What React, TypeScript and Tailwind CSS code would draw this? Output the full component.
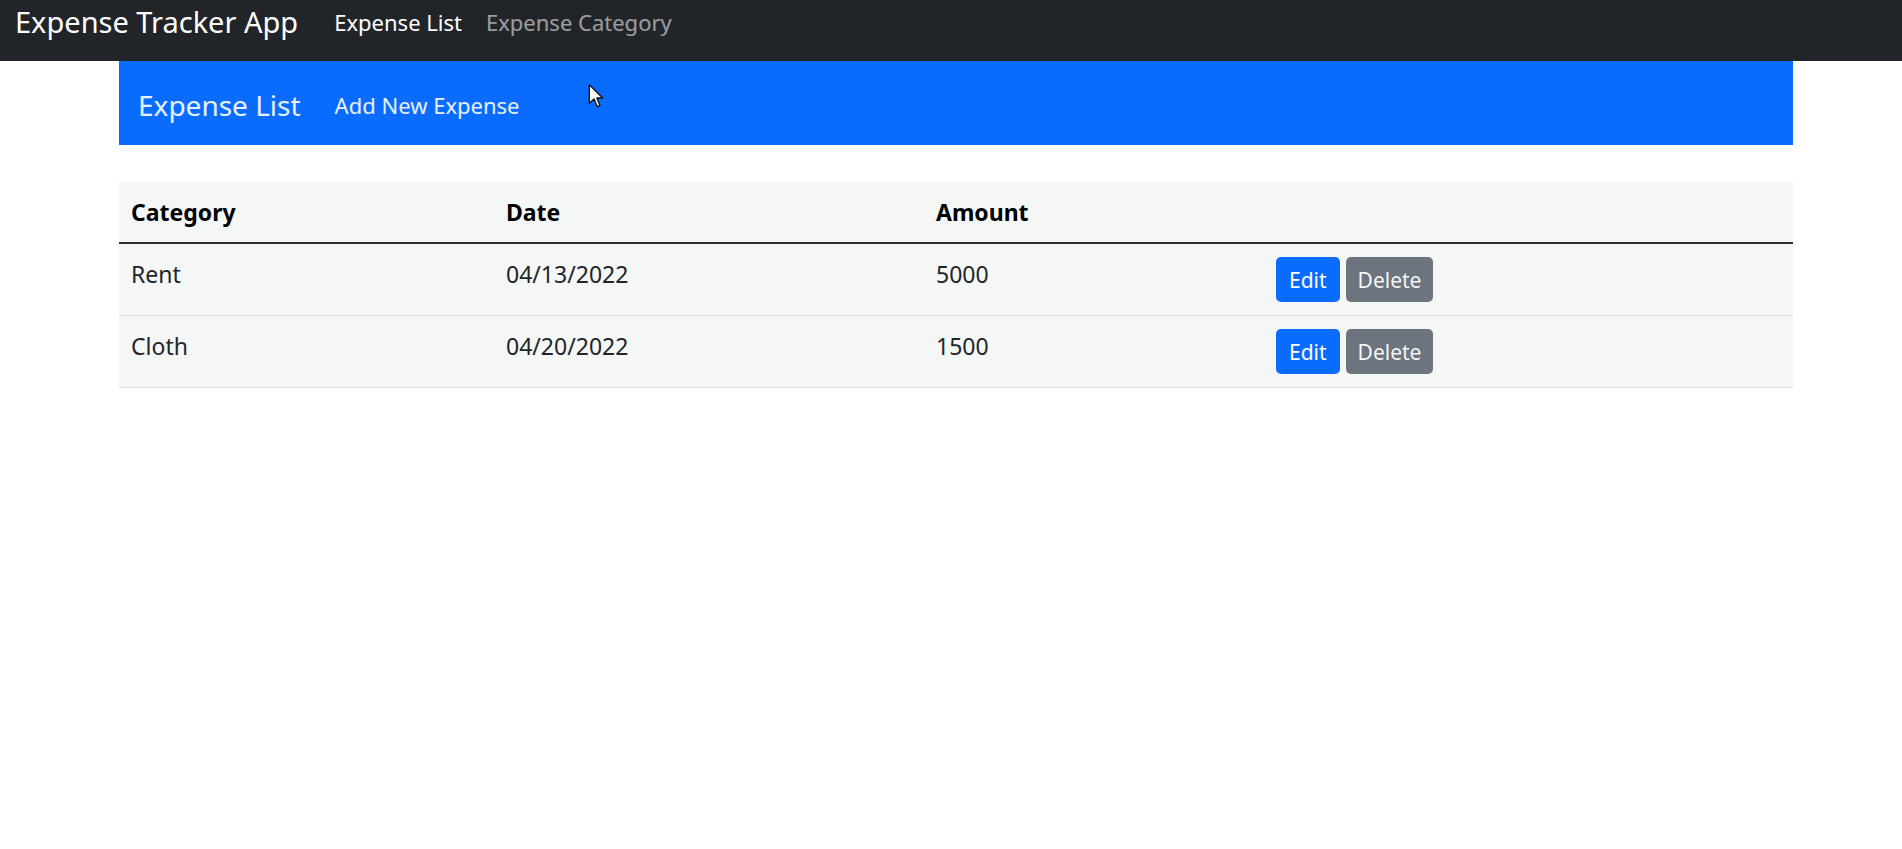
import * as React from "react";

type Expense = {
  id: number;
  category: string;
  date: string;
  amount: number;
};

const expenses: Expense[] = [
  { id: 1, category: "Rent", date: "04/13/2022", amount: 5000 },
  { id: 2, category: "Cloth", date: "04/20/2022", amount: 1500 },
];

const font = { fontFamily: '"Segoe UI", "Noto Sans", sans-serif' };

export default function App() {
  return (
    <div className="min-h-screen bg-white text-[#212529]" style={font}>
      <nav className="h-[61px] bg-[#212529] flex items-start pt-[2px] pl-[15px]">
        <a className="text-[29px] leading-[40px] text-white mr-[36px]">Expense Tracker App</a>
        <a className="text-[22px] leading-[40px] text-white pr-[24px]">Expense List</a>
        <a className="text-[22px] leading-[40px] text-white/55">Expense Category</a>
      </nav>

      <div className="ml-[119px] mr-[109px]">
        <div className="relative h-[84px] bg-[#0a6cff] flex items-center pl-[19px] pt-[4px]">
          <span className="text-[28px] text-white/90 mr-[34px]">Expense List</span>
          <span className="text-[22px] text-white/90">Add New Expense</span>
          <Cursor />
        </div>

        <ExpenseTable />
      </div>
    </div>
  );
}

function ExpenseTable() {
  return (
    <div className="mt-[37px] bg-[#f5f6f6]">
      <div className="grid grid-cols-[375px_430px_340px_1fr] border-b-2 border-[#2b2e31] text-[23px] font-bold text-black leading-[36px]">
        <div className="py-3 px-3">Category</div>
        <div className="py-3 px-3">Date</div>
        <div className="py-3 px-3">Amount</div>
        <div className="py-3 px-3" />
      </div>
      {expenses.map((e) => (
        <div
          key={e.id}
          className="grid grid-cols-[375px_430px_340px_1fr] border-b border-[#dee2e6] text-[23px] leading-[36px]"
        >
          <div className="py-3 px-3">{e.category}</div>
          <div className="py-3 px-3">{e.date}</div>
          <div className="py-3 px-3">{e.amount}</div>
          <div className="py-[13px] px-3 flex gap-[6px]">
            <button className="h-[45px] px-[13px] rounded-[5px] bg-[#0a6cff] text-white text-[21px]">
              Edit
            </button>
            <button className="h-[45px] px-[12px] rounded-[5px] bg-[#6c757d] text-white/95 text-[21px]">
              Delete
            </button>
          </div>
        </div>
      ))}
    </div>
  );
}

function Cursor() {
  return (
    <svg
      className="absolute left-[469px] top-[22px]"
      width="16"
      height="26"
      viewBox="0 0 12 19"
    >
      <path
        d="M1 1 L1 15 L4.5 11.8 L7 17.5 L9 16.6 L6.6 11 L11 11 Z"
        fill="white"
        stroke="#111"
        strokeWidth="1"
        strokeLinejoin="round"
      />
    </svg>
  );
}
